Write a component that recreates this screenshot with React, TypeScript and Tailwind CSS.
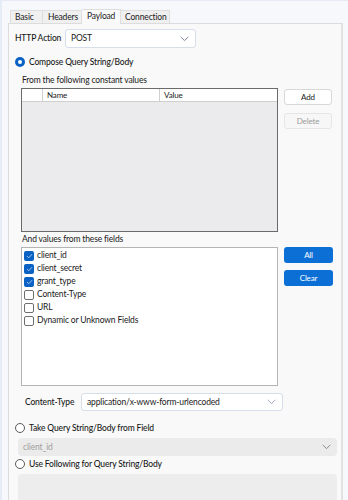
import React from "react";

const font = { fontFamily: 'Lato, "Noto Sans", sans-serif' };

function Chevron({ color = "#7a869a" }: { color?: string }) {
  return (
    <svg width="9" height="6" viewBox="0 0 9 6" fill="none">
      <path d="M1 1.2 L4.5 4.6 L8 1.2" stroke={color} strokeWidth="1" strokeLinecap="round" strokeLinejoin="round" />
    </svg>
  );
}

function Check({ checked, label }: { checked: boolean; label: string }) {
  return (
    <div className="flex items-center h-[13px] gap-[3px]">
      {checked ? (
        <div className="w-[10px] h-[10px] rounded-[2px] bg-[#0b62c4] flex items-center justify-center">
          <svg width="7" height="6" viewBox="0 0 7 6" fill="none">
            <path d="M1 3 L2.8 4.8 L6 1.2" stroke="#9fc3f0" strokeWidth="1" />
          </svg>
        </div>
      ) : (
        <div className="w-[10px] h-[10px] rounded-[2px] border border-[#6e6e6e] bg-white" />
      )}
      <span className="text-[8.5px] text-[#1a1a1a] leading-none whitespace-nowrap">{label}</span>
    </div>
  );
}

function Radio({ checked, label }: { checked: boolean; label: string }) {
  return (
    <div className="flex items-center h-[12px] gap-[4px] pl-[6px]">
      {checked ? (
        <div className="w-[10px] h-[10px] rounded-full bg-[#0b62c4] flex items-center justify-center">
          <div className="w-[4px] h-[4px] rounded-full bg-white" />
        </div>
      ) : (
        <div className="w-[10px] h-[10px] rounded-full border border-[#5a5a5a] bg-white" />
      )}
      <span className="text-[8.5px] text-[#1a1a1a] leading-none whitespace-nowrap font-medium">{label}</span>
    </div>
  );
}

export default function App() {
  return (
    <div
      className="w-[348px] h-[500px] overflow-hidden bg-[#f6f8fb] flex flex-col border-l-2 border-l-[#e6ecf5] border-t border-t-[#e6ebf5] tracking-[-0.15px]"
      style={font}
    >
      <div className="flex items-end pl-[8px] pt-[7px] h-[22px]">
        <div className="h-[13px] w-[33px] border border-b-0 border-[#dedede] bg-[#f0f0f0] text-[8.5px] leading-[12px] pl-[4px] text-[#1a1a1a]">Basic</div>
        <div className="h-[13px] w-[39px] border border-l-0 border-b-0 border-[#dedede] bg-[#f0f0f0] text-[8.5px] leading-[12px] pl-[5px] text-[#1a1a1a]">Headers</div>
        <div className="h-[15px] w-[39px] border border-l-0 border-b-0 border-[#dedede] bg-[#f9f9f9] text-[8.5px] leading-[13px] pl-[5px] text-[#1a1a1a] relative top-[1px]">Payload</div>
        <div className="h-[13px] w-[49px] border border-l-0 border-b-0 border-[#dedede] bg-[#f0f0f0] text-[8.5px] leading-[12px] pl-[4px] text-[#1a1a1a]">Connection</div>
      </div>
      <div className="ml-[6px] w-[335px] flex-1 border border-[#dcdcdc] border-r-2 border-r-[#e2e2e2] bg-[#f9f9f9] pt-[5px] flex flex-col">
        <div className="flex items-center h-[19px] pl-[6px]">
          <span className="text-[8.5px] text-[#1a1a1a] w-[50px] shrink-0 whitespace-nowrap font-medium">HTTP Action</span>
          <div className="w-[131px] h-[19px] rounded-[3px] border border-[#d6deea] bg-white flex items-center justify-between pl-[5px] pr-[6px]">
            <span className="text-[8.5px] text-[#1a1a1a]">POST</span>
            <Chevron />
          </div>
        </div>
        <div className="mt-[8px]">
          <Radio checked label="Compose Query String/Body" />
        </div>
        <div className="mt-[7px] h-[10px] pl-[13px] text-[8.5px] leading-[10px] text-[#1a1a1a]">From the following constant values</div>
        <div className="mt-[3px] flex pl-[12px]">
          <div className="w-[257px] h-[144px] border border-[#6a6a6a] bg-[#ebebee] flex flex-col">
            <div className="flex h-[13px] bg-white border-b border-[#cfcfcf] text-[8px] leading-[12px] text-[#1a1a1a]">
              <div className="w-[21px] border-r border-[#cfcfcf]" />
              <div className="w-[117px] border-r border-[#cfcfcf] pl-[4px]">Name</div>
              <div className="flex-1 pl-[4px]">Value</div>
            </div>
          </div>
          <div className="ml-[6px] flex flex-col gap-[8px] pt-[1px]">
            <div className="w-[48px] h-[16px] rounded-[3px] border border-[#d8d8d8] bg-white text-[8px] leading-[14px] text-center text-[#1a1a1a]">Add</div>
            <div className="w-[48px] h-[16px] rounded-[3px] border border-[#e6e6e6] bg-[#f7f7f7] text-[8px] leading-[14px] text-center text-[#9a9a9a]">Delete</div>
          </div>
        </div>
        <div className="mt-[1px] h-[12px] pl-[13px] text-[8.5px] leading-[12px] text-[#1a1a1a]">And values from these fields</div>
        <div className="mt-[2px] flex pl-[12px]">
          <div className="w-[257px] h-[139px] border border-[#b4b4b4] bg-white pl-[2px] pt-[1px] flex flex-col">
            <Check checked label="client_id" />
            <Check checked label="client_secret" />
            <Check checked label="grant_type" />
            <Check checked={false} label="Content-Type" />
            <Check checked={false} label="URL" />
            <Check checked={false} label="Dynamic or Unknown Fields" />
          </div>
          <div className="ml-[6px] flex flex-col gap-[7px]">
            <div className="w-[49px] h-[16px] rounded-[3px] bg-[#0b6fd6] text-[8px] leading-[16px] text-center text-white">All</div>
            <div className="w-[49px] h-[16px] rounded-[3px] bg-[#0b6fd6] text-[8px] leading-[16px] text-center text-white">Clear</div>
          </div>
        </div>
        <div className="mt-[7px] flex items-center h-[18px] pl-[16px]">
          <span className="text-[8.5px] text-[#1a1a1a] w-[56px] shrink-0 whitespace-nowrap font-medium">Content-Type</span>
          <div className="w-[202px] h-[18px] rounded-[3px] border border-[#d6deea] bg-white flex items-center justify-between pl-[5px] pr-[6px]">
            <span className="text-[8.5px] text-[#1a1a1a]">application/x-www-form-urlencoded</span>
            <Chevron color="#9aa5b5" />
          </div>
        </div>
        <div className="mt-[11px]">
          <Radio checked={false} label="Take Query String/Body from Field" />
        </div>
        <div className="mt-[4px] ml-[9px] w-[319px] h-[18px] rounded-[4px] bg-[#ebebeb] flex items-center justify-between pl-[5px] pr-[6px]">
          <span className="text-[8.5px] text-[#a0a0a0]">client_id</span>
          <Chevron color="#8a8a8a" />
        </div>
        <div className="mt-[2px]">
          <Radio checked={false} label="Use Following for Query String/Body" />
        </div>
        <div className="mt-[4px] ml-[9px] w-[319px] h-[40px] rounded-[4px] bg-[#ededed]" />
      </div>
    </div>
  );
}
